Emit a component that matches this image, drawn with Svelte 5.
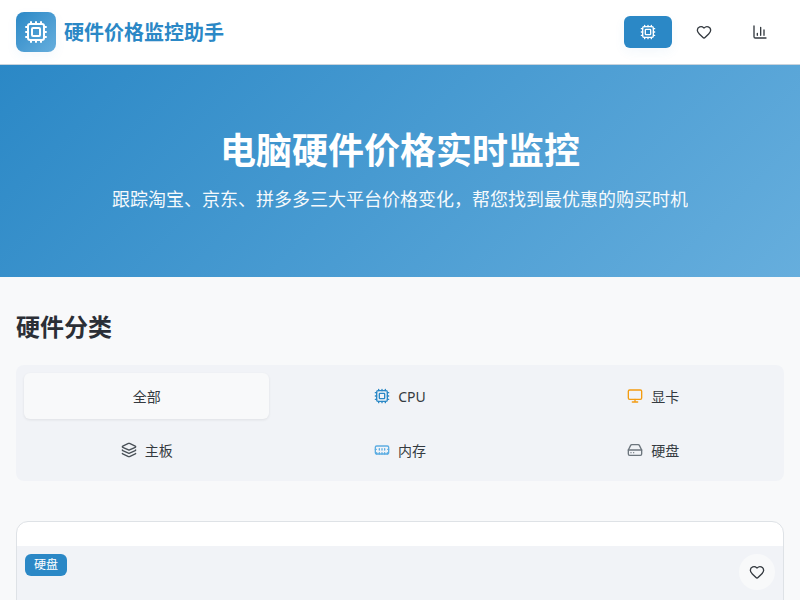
<script>
  const cats = [
    { name: '全部' },
    { name: 'CPU', icon: 'cpu', color: '#2b88c6' },
    { name: '显卡', icon: 'monitor', color: '#f39c12' },
    { name: '主板', icon: 'layers', color: '#495057' },
    { name: '内存', icon: 'memory', color: '#5dade2' },
    { name: '硬盘', icon: 'drive', color: '#6c757d' }
  ];
</script>

{#snippet icon(kind, size)}
  <svg width={size} height={size} viewBox="0 0 24 24" fill="none" stroke="currentColor" stroke-width="2" stroke-linecap="round" stroke-linejoin="round">
    {#if kind === 'cpu'}
      <rect x="4" y="4" width="16" height="16" rx="2" />
      <rect x="8" y="8" width="8" height="8" rx="1" />
      <path d="M12 20v2M12 2v2M17 20v2M17 2v2M2 12h2M2 17h2M2 7h2M20 12h2M20 17h2M20 7h2M7 20v2M7 2v2" />
    {:else if kind === 'heart'}
      <path d="M2 9.5a5.5 5.5 0 0 1 9.591-3.676.56.56 0 0 0 .818 0A5.49 5.49 0 0 1 22 9.5c0 2.29-1.5 4-3 5.5l-5.492 5.313a2 2 0 0 1-3 .019L5 15c-1.5-1.5-3-3.2-3-5.5" />
    {:else if kind === 'chart'}
      <path d="M3 3v16a2 2 0 0 0 2 2h16" />
      <path d="M18 17V9M13 17V5M8 17v-3" />
    {:else if kind === 'monitor'}
      <rect x="2" y="3" width="20" height="14" rx="2" />
      <path d="M8 21h8M12 17v4" />
    {:else if kind === 'layers'}
      <path d="M12.83 2.18a2 2 0 0 0-1.66 0L2.6 6.08a1 1 0 0 0 0 1.83l8.58 3.91a2 2 0 0 0 1.66 0l8.58-3.9a1 1 0 0 0 0-1.83z" />
      <path d="M2 12a1 1 0 0 0 .58.91l8.6 3.91a2 2 0 0 0 1.65 0l8.58-3.9A1 1 0 0 0 22 12" />
      <path d="M2 17a1 1 0 0 0 .58.91l8.6 3.91a2 2 0 0 0 1.65 0l8.58-3.9A1 1 0 0 0 22 17" />
    {:else if kind === 'memory'}
      <path d="M12 12v-2M12 18v-2M16 12v-2M16 18v-2M2 11h1.5M20 18v-2M20.5 11H22M4 18v-2M8 12v-2M8 18v-2" />
      <rect x="2" y="6" width="20" height="12" rx="2" />
    {:else}
      <path d="M22 12H2" />
      <path d="M5.45 5.11 2 12v6a2 2 0 0 0 2 2h16a2 2 0 0 0 2-2v-6l-3.45-6.89A2 2 0 0 0 16.76 4H7.24a2 2 0 0 0-1.79 1.11Z" />
      <path d="M6 16h.01M10 16h.01" />
    {/if}
  </svg>
{/snippet}

<header class="navbar">
  <div class="brand">
    <span class="logo">{@render icon('cpu', 24)}</span>
    <span class="brand-name">硬件价格监控助手</span>
  </div>
  <nav class="nav">
    <button class="nav-btn active">{@render icon('cpu', 16)}</button>
    <button class="nav-btn">{@render icon('heart', 16)}</button>
    <button class="nav-btn">{@render icon('chart', 16)}</button>
  </nav>
</header>

<section class="hero">
  <h1>电脑硬件价格实时监控</h1>
  <p>跟踪淘宝、京东、拼多多三大平台价格变化，帮您找到最优惠的购买时机</p>
</section>

<main class="content">
  <h2>硬件分类</h2>
  <div class="tabs">
    {#each cats as c, i}
      <button class="tab" class:selected={i === 0}>
        {#if c.icon}
          <span class="tab-icon" style="color: {c.color}">{@render icon(c.icon, 16)}</span>
        {/if}
        {c.name}
      </button>
    {/each}
  </div>

  <article class="card">
    <div class="card-image">
      <span class="badge">硬盘</span>
      <button class="fav">{@render icon('heart', 16)}</button>
    </div>
  </article>
</main>

<style>
  :global(body) {
    margin: 0;
    background: #f8f9fa;
    font-family: "Noto Sans", "Noto Sans CJK SC", sans-serif;
    color: #343a40;
    height: 600px;
    overflow: hidden;
  }

  button {
    font-family: inherit;
    border: none;
    background: none;
    cursor: pointer;
    padding: 0;
  }

  .navbar {
    height: 65px;
    box-sizing: border-box;
    padding: 0 16px 1px;
    display: flex;
    align-items: center;
    justify-content: space-between;
    background: #fff;
    border-bottom: 1px solid #c9d3dc;
  }

  .brand {
    display: flex;
    align-items: center;
    gap: 8px;
  }

  .logo {
    width: 40px;
    height: 40px;
    border-radius: 8px;
    display: flex;
    align-items: center;
    justify-content: center;
    color: #fff;
    background: linear-gradient(135deg, #2b88c6, #66aedd);
    box-shadow: 0 4px 12px rgba(43, 136, 198, 0.06);
  }

  .brand-name {
    font-size: 20px;
    font-weight: 700;
    color: #2b88c6;
  }

  .nav {
    display: flex;
    gap: 8px;
  }

  .nav-btn {
    width: 48px;
    height: 32px;
    border-radius: 6px;
    display: flex;
    align-items: center;
    justify-content: center;
    color: #343a40;
  }

  .nav-btn.active {
    background: #2b88c6;
    color: #fff;
    box-shadow: 0 4px 12px rgba(43, 136, 198, 0.06);
  }

  .hero {
    height: 212px;
    box-sizing: border-box;
    padding-top: 59px;
    text-align: center;
    color: #fff;
    background: linear-gradient(135deg, #2b88c6, #66aedd);
  }

  h1 {
    margin: 0 0 8px;
    font-size: 36px;
    line-height: 54px;
    font-weight: 700;
  }

  .hero p {
    margin: 0;
    font-size: 18px;
    line-height: 27px;
    opacity: 0.95;
  }

  .content {
    padding: 32px 16px;
  }

  h2 {
    margin: 0 0 20px;
    font-size: 24px;
    line-height: 36px;
    font-weight: 700;
    color: #2b2f36;
  }

  .tabs {
    display: grid;
    grid-template-columns: repeat(3, 1fr);
    gap: 8px;
    padding: 8px;
    background: #f1f3f7;
    border-radius: 8px;
    margin-bottom: 40px;
  }

  .tab {
    height: 46px;
    border-radius: 6px;
    display: flex;
    align-items: center;
    justify-content: center;
    gap: 8px;
    font-size: 14px;
    color: #343a40;
  }

  .tab.selected {
    background: #f8f9fa;
    box-shadow: 0 1px 3px rgba(0, 0, 0, 0.08);
  }

  .tab-icon {
    display: flex;
  }

  .card {
    background: #fff;
    border: 1px solid #dee2e6;
    border-radius: 12px;
    padding-top: 24px;
    overflow: hidden;
  }

  .card-image {
    position: relative;
    height: 200px;
    background: #f1f3f7;
  }

  .badge {
    position: absolute;
    top: 8px;
    left: 8px;
    height: 22px;
    line-height: 22px;
    padding: 0 9px;
    border-radius: 6px;
    background: #2b88c6;
    color: #fff;
    font-size: 12px;
  }

  .fav {
    position: absolute;
    top: 8px;
    right: 8px;
    width: 36px;
    height: 36px;
    border-radius: 50%;
    background: #f8f9fa;
    color: #343a40;
    display: flex;
    align-items: center;
    justify-content: center;
  }
</style>
